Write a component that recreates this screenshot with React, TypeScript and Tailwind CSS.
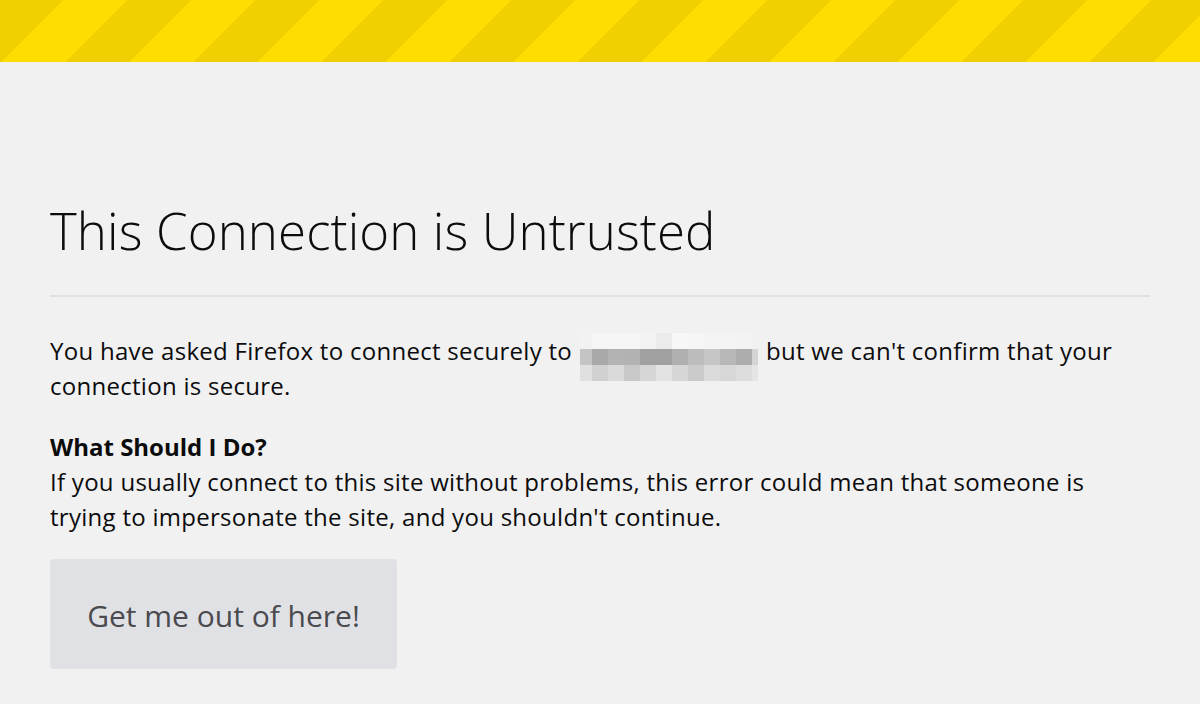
import React from 'react';

const mosaic = [
  ['#f2f2f2', '#f6f6f6', '#f5f5f5', '#f5f5f5', '#f3f3f3', '#ebebeb', '#f7f7f7', '#f6f6f6', '#f4f4f4', '#f4f4f4', '#f3f3f3', '#f1f1f1'],
  ['#c4c4c4', '#a9a9a9', '#b3b3b3', '#b2b2b2', '#a1a1a1', '#a0a0a0', '#b0b0b0', '#bcbcbc', '#c6c6c6', '#b8b8b8', '#adadad', '#d4d4d4'],
  ['#e0e0e0', '#d1d1d1', '#dadada', '#c8c8c8', '#d6d6d6', '#e3e3e3', '#d6d6d6', '#cbcbcb', '#dbdbdb', '#d7d7d7', '#dddddd', '#e5e5e5'],
];

const widths = [12, 16, 16, 16, 16, 16, 16, 16, 16, 16, 16, 6];

const Redacted = () => (
  <span className="inline-flex flex-col align-middle mx-2 -my-4 relative top-[3px]">
    {mosaic.map((row, i) => (
      <span key={i} className="flex h-4">
        {row.map((c, j) => (
          <span key={j} className="h-4" style={{ width: widths[j], background: c }} />
        ))}
      </span>
    ))}
  </span>
);

export default function App() {
  return (
    <div className="min-h-[704px] bg-[#f1f1f1] text-[#0c0c0d]" style={{ fontFamily: '"Open Sans", "Noto Sans", sans-serif' }}>
      <div className="h-[62px] bg-[repeating-linear-gradient(135deg,#f0d000_0_45.25px,#ffdd00_45.25px_90.5px)]" />
      <main className="px-[50px] pt-[138px]">
        <h1 className="text-[51px] font-light leading-[60px] tracking-[0.1px] pb-[35px] border-b-2 border-[#e1e1e3]">
          This Connection is Untrusted
        </h1>
        <div className="text-[24px] leading-[35px] tracking-[0.28px]">
          <p className="mt-[36px]">
            You have asked Firefox to connect securely to<Redacted />but we can't confirm that your connection is secure.
          </p>
          <h2 className="mt-[26px] font-bold tracking-[0px]">What Should I Do?</h2>
          <p>
            If you usually connect to this site without problems, this error could mean that someone is trying to impersonate the site, and you shouldn't continue.
          </p>
        </div>
        <button className="mt-[25px] w-[347px] h-[110px] rounded-[4px] bg-[#e0e1e5] text-[30px] text-[#4a4a4f] pt-[3px]">
          Get me out of here!
        </button>
      </main>
    </div>
  );
}
